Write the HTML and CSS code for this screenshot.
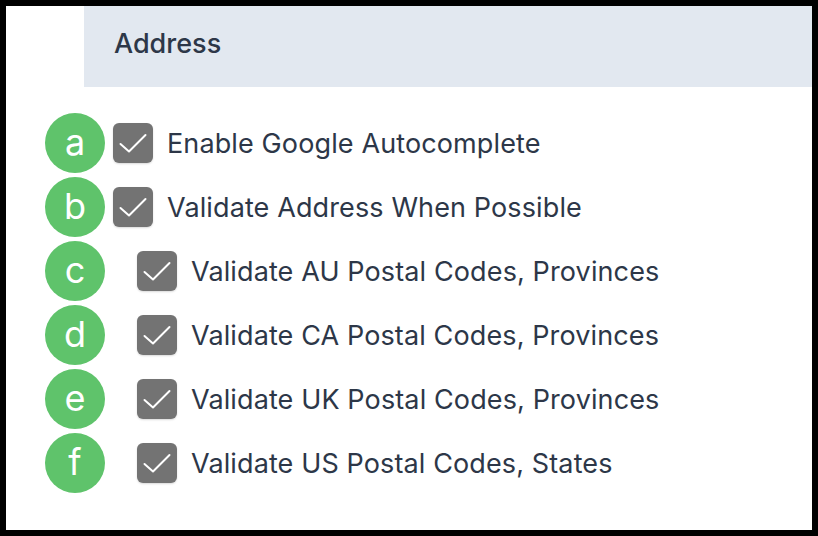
FILE: index.html
```html
<!DOCTYPE html>
<html lang="en">
<head>
<meta charset="utf-8">
<title>Address</title>
<link rel="stylesheet" href="styles.css">
</head>
<body>
<div class="frame">
  <div class="panel">
    <div class="header"><h2 class="title">Address</h2></div>
    <ul class="options">
      <li class="row">
        <span class="badge">a</span>
        <span class="box"><svg viewBox="0 0 40 40" class="check"><path d="M7.5 21 L16 28.5 L32.5 12"/></svg></span>
        <span class="label">Enable Google Autocomplete</span>
      </li>
      <li class="row">
        <span class="badge">b</span>
        <span class="box"><svg viewBox="0 0 40 40" class="check"><path d="M7.5 21 L16 28.5 L32.5 12"/></svg></span>
        <span class="label">Validate Address When Possible</span>
      </li>
      <li class="row sub">
        <span class="badge">c</span>
        <span class="box"><svg viewBox="0 0 40 40" class="check"><path d="M7.5 21 L16 28.5 L32.5 12"/></svg></span>
        <span class="label">Validate AU Postal Codes, Provinces</span>
      </li>
      <li class="row sub">
        <span class="badge">d</span>
        <span class="box"><svg viewBox="0 0 40 40" class="check"><path d="M7.5 21 L16 28.5 L32.5 12"/></svg></span>
        <span class="label">Validate CA Postal Codes, Provinces</span>
      </li>
      <li class="row sub">
        <span class="badge">e</span>
        <span class="box"><svg viewBox="0 0 40 40" class="check"><path d="M7.5 21 L16 28.5 L32.5 12"/></svg></span>
        <span class="label">Validate UK Postal Codes, Provinces</span>
      </li>
      <li class="row sub">
        <span class="badge">f</span>
        <span class="box"><svg viewBox="0 0 40 40" class="check"><path d="M7.5 21 L16 28.5 L32.5 12"/></svg></span>
        <span class="label">Validate US Postal Codes, States</span>
      </li>
    </ul>
  </div>
</div>
</body>
</html>
```
FILE: styles.css
```css
html, body {
  margin: 0;
  padding: 0;
  background: #000;
}
body {
  font-family: Inter, "Noto Sans", "Liberation Sans", sans-serif;
  color: #2d3748;
}
.frame {
  width: 818px;
  height: 536px;
  padding: 6px 6px 6px 6px;
  box-sizing: border-box;
}
.panel {
  background: #fff;
  height: 524px;
  display: flex;
  flex-direction: column;
}
.header {
  margin-left: 78px;
  height: 81px;
  background: #e2e8f0;
  display: flex;
  align-items: center;
  padding-left: 30px;
  box-sizing: border-box;
}
.title {
  margin: 0;
  font-size: 27px;
  font-weight: 500;
  color: #2d3748;
  padding-bottom: 6px;
}
.options {
  list-style: none;
  margin: 0;
  padding: 24px 0 0 39px;
  display: flex;
  flex-direction: column;
}
.row {
  height: 64px;
  display: flex;
  align-items: center;
}
.badge {
  width: 60px;
  height: 60px;
  border-radius: 50%;
  background: #5fc36b;
  color: #fff;
  font-size: 36px;
  display: flex;
  align-items: center;
  justify-content: center;
  line-height: 1;
  padding-bottom: 3px;
  box-sizing: border-box;
  flex: none;
}
.box {
  width: 40px;
  height: 40px;
  margin-left: 8px;
  border-radius: 6px;
  background: #737373;
  box-shadow: 0 1px 2px rgba(0,0,0,0.15);
  flex: none;
  display: flex;
}
.sub .box {
  margin-left: 32px;
}
.check {
  width: 40px;
  height: 40px;
}
.check path {
  fill: none;
  stroke: #fff;
  stroke-width: 2;
  stroke-linecap: round;
  stroke-linejoin: round;
}
.label {
  margin-left: 14px;
  font-size: 27px;
  letter-spacing: 0.12px;
  color: #2d3748;
}
```
